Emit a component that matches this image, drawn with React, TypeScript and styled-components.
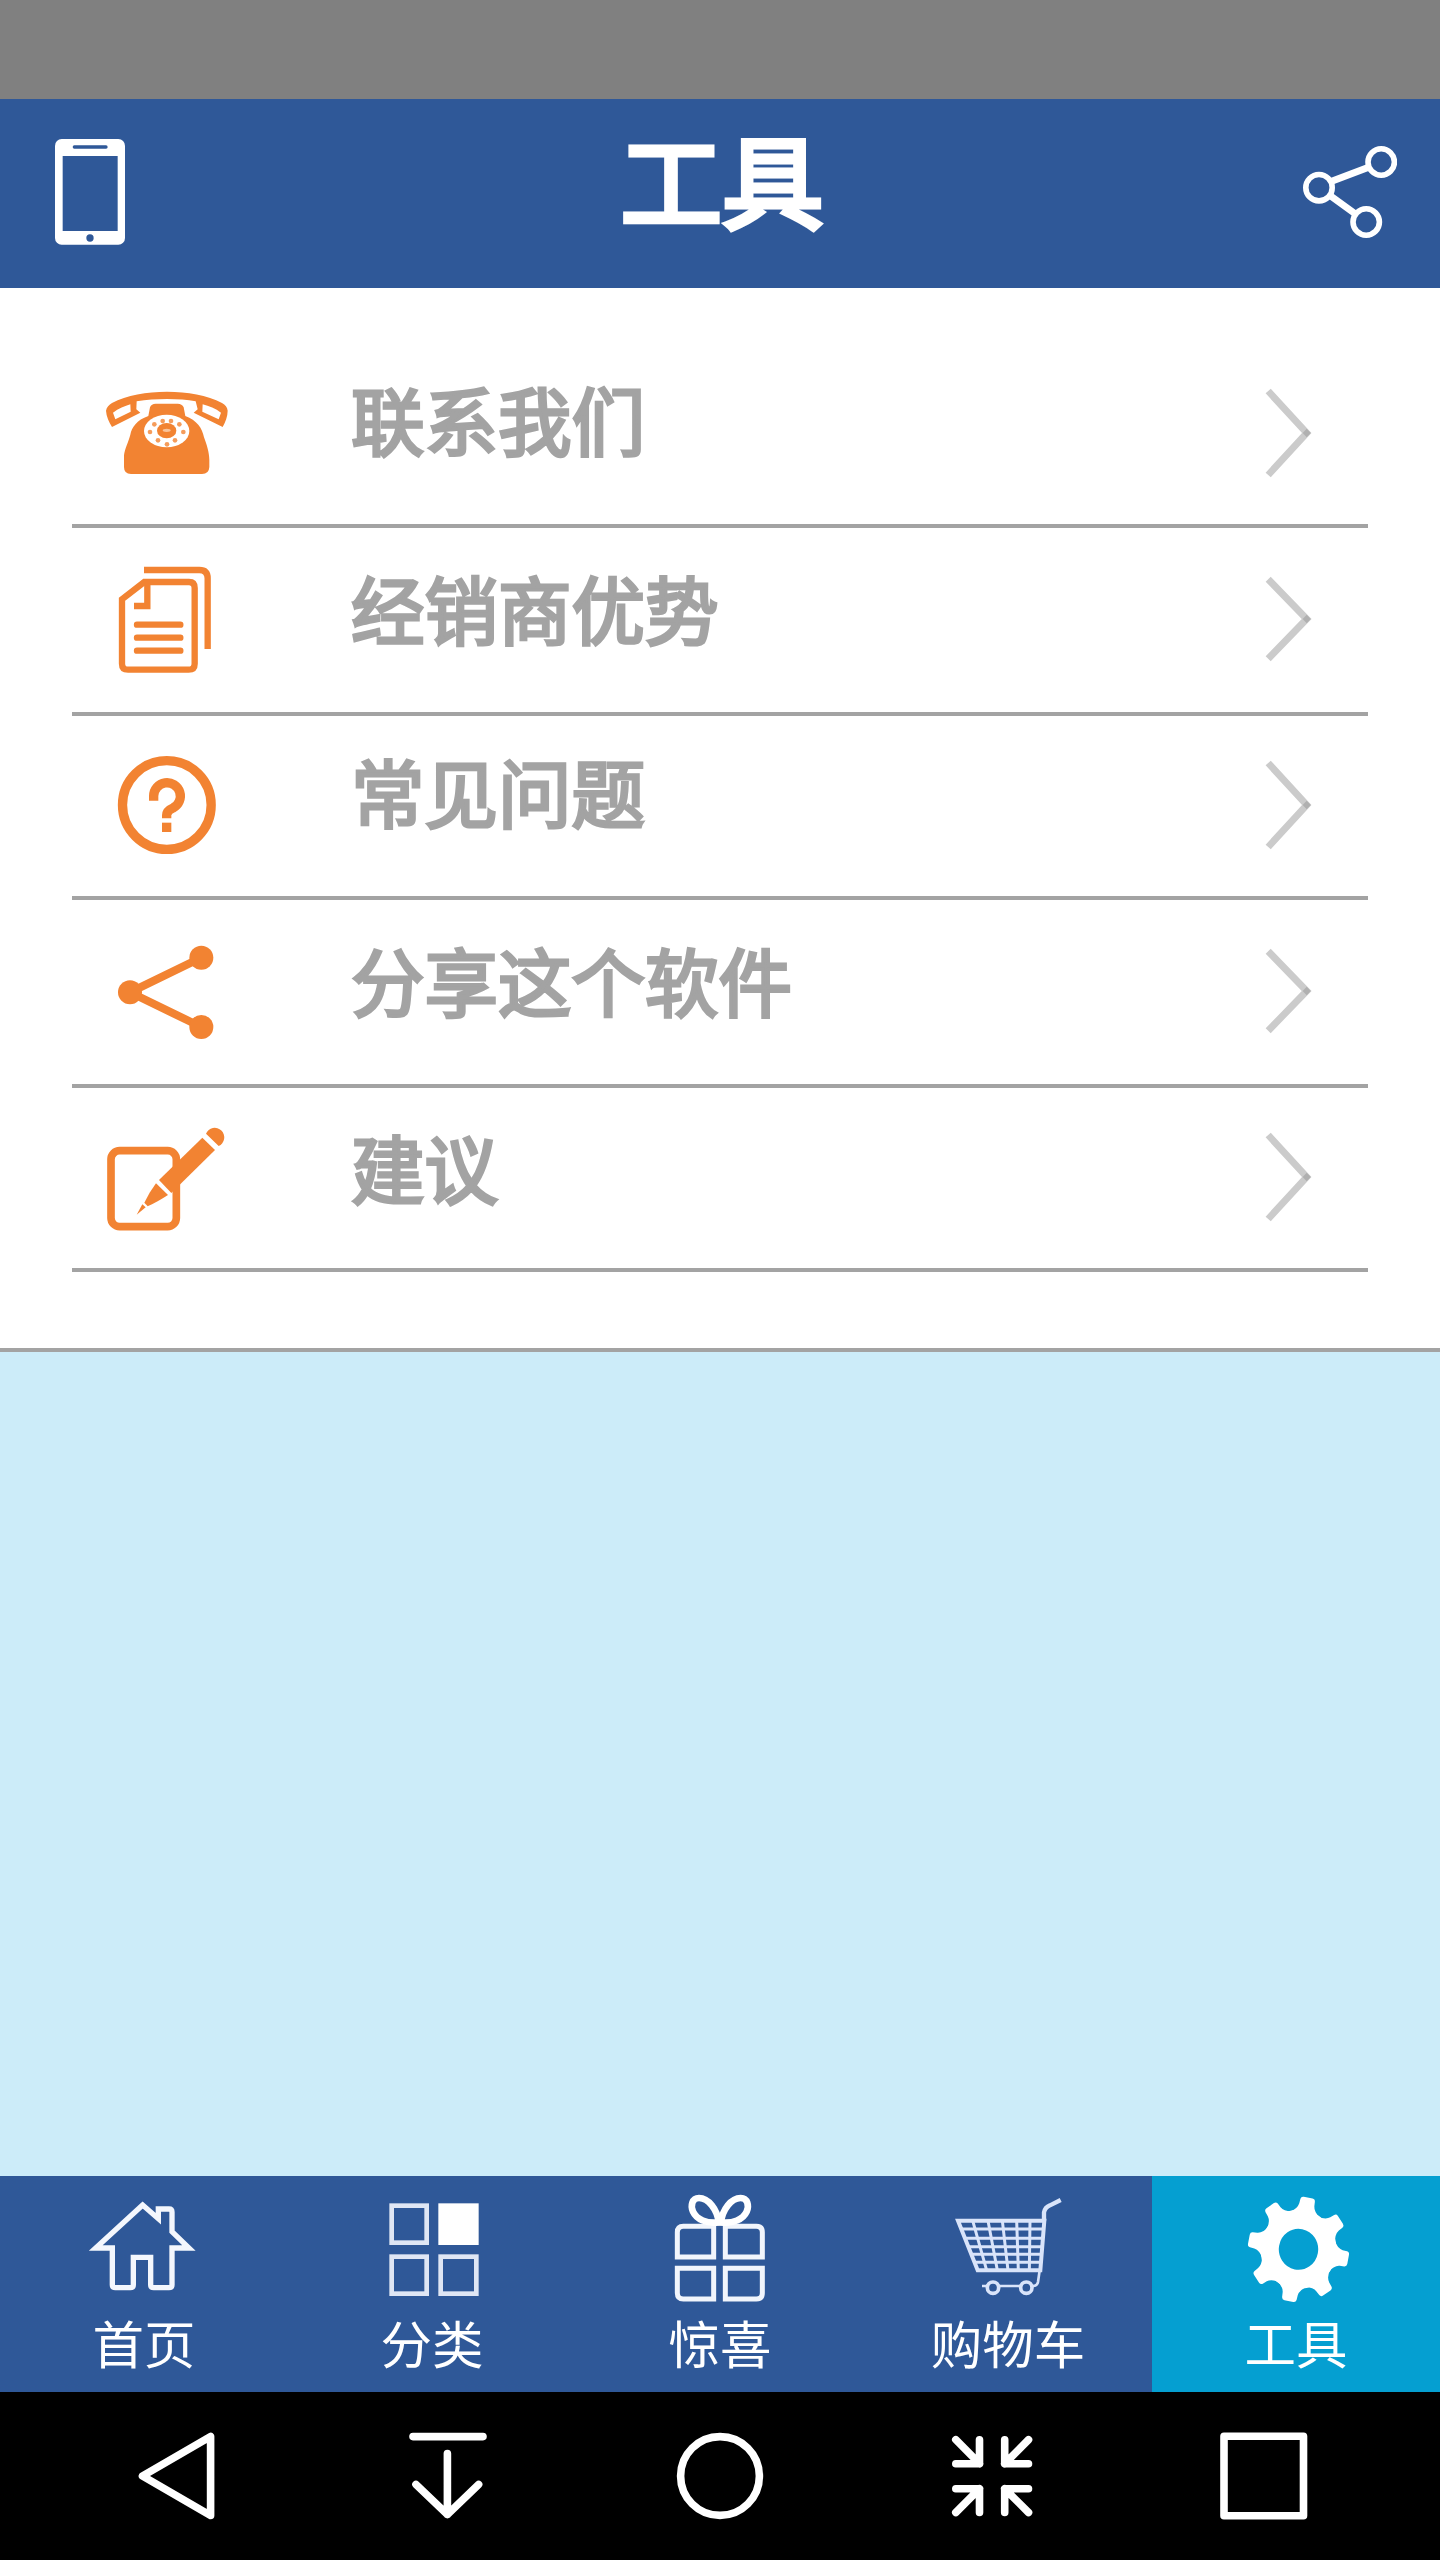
import React from "react";
import styled, { createGlobalStyle } from "styled-components";

const BLUE = "#2f5898";
const CYAN = "#059fd1";
const ORANGE = "#f28332";
const GREY = "#a3a3a3";

const GlobalStyle = createGlobalStyle`
  *, *::before, *::after { box-sizing: border-box; }
  body {
    margin: 0;
    font-family: "Noto Sans CJK SC", "Noto Sans", sans-serif;
  }
`;

const Screen = styled.div`
  display: flex;
  flex-direction: column;
  width: 1440px;
  height: 2560px;
  overflow: hidden;
  background: #ccecf9;
`;

const StatusBar = styled.div`
  flex: none;
  height: 99px;
  background: #808080;
`;

const Header = styled.header`
  flex: none;
  display: flex;
  align-items: center;
  justify-content: space-between;
  height: 189px;
  padding: 0 43px 3px 55px;
  background: ${BLUE};
`;

const Title = styled.h1`
  margin: 0;
  padding: 0 0 31px 16px;
  color: #fff;
  font-size: 101.5px;
  font-weight: 400;
  line-height: 120px;
  -webkit-text-stroke: 5.2px #fff;
`;

const Menu = styled.ul`
  flex: none;
  margin: 0;
  padding: 52px 72px 76px;
  list-style: none;
  background: #fff;
  border-bottom: 4px solid ${GREY};
`;

const MenuRow = styled.li<{ $height: number }>`
  display: flex;
  align-items: center;
  height: ${(p) => p.$height}px;
  padding: 0 48px 0 24px;
  border-bottom: 4px solid ${GREY};
`;

const MenuLabel = styled.span<{ $lift: number }>`
  flex: 1;
  padding: 0 0 ${(p) => p.$lift}px 115px;
  color: ${GREY};
  font-size: 73.5px;
  font-weight: 400;
  line-height: 100px;
  white-space: nowrap;
  -webkit-text-stroke: 3.2px ${GREY};
`;

const Spacer = styled.div`
  flex: 1;
`;

const TabBar = styled.nav`
  flex: none;
  display: grid;
  grid-template-columns: repeat(5, 1fr);
  height: 216px;
  background: ${BLUE};
`;

const Tab = styled.div<{ $active?: boolean }>`
  display: flex;
  flex-direction: column;
  align-items: center;
  padding-top: 14px;
  background: ${(p) => (p.$active ? CYAN : "transparent")};
`;

const TabLabel = styled.span`
  margin-top: 4px;
  color: #fff;
  font-size: 51.5px;
  line-height: 64px;
`;

const SystemBar = styled.footer`
  flex: none;
  display: grid;
  grid-template-columns: repeat(5, 272px);
  justify-content: center;
  place-items: center;
  height: 168px;
  background: #000;
`;

const Icon = styled.svg<{ $w: number; $h: number }>`
  display: block;
  flex: none;
  width: ${(p) => p.$w}px;
  height: ${(p) => p.$h}px;
  fill: none;
`;

const SystemIcon = styled(Icon)`
  stroke: #fff;
  stroke-width: 7.6;
  stroke-linecap: round;
  stroke-linejoin: round;
`;

const MobileIcon = () => (
  <Icon $w={70} $h={106} viewBox="165 178 210 318">
    <rect x="165" y="178" width="210" height="317" rx="20" fill="#fff" />
    <rect x="188" y="229" width="165" height="225" fill={BLUE} />
    <path d="M223 202H318" stroke={BLUE} strokeWidth="10" strokeLinecap="round" />
    <circle cx="270" cy="475" r="11" fill={BLUE} />
  </Icon>
);

const HeaderShareIcon = () => (
  <Icon $w={94} $h={92} viewBox="1303 146 94 92" stroke="#fff" strokeWidth="5.600">
    <circle cx="1319" cy="187.7" r="13.2" />
    <circle cx="1381.2" cy="162" r="13.2" />
    <circle cx="1366.2" cy="222" r="13.2" />
    <path d="M1331 181.500L1368 167.500M1330 195.500L1355.500 214" strokeWidth="7" />
  </Icon>
);

const DIAL_DOTS = [
  [283, 193], [308, 183], [333, 183], [358, 193], [270, 216],
  [370, 216], [294, 241], [345, 241], [321, 253],
];

const PhoneIcon = () => (
  <Icon $w={140} $h={120} viewBox="108 36 420 360">
    <path
      fill={ORANGE}
      fillRule="evenodd"
      d="M138 152C140 142 147 134 156 129C200 105 260 95 321 95C382 95 442 105 486 129C496 134 502 142 503 152C503 169 496 187 488 201L401 158L413 148L407 124C383 119 352 117 321 117C290 117 259 119 230 124L229 148L241 158L156 201C147 187 139 169 138 152ZM159 158L166 178L212 155L211 133C195 138 175 146 159 158ZM428 133L427 155L476 178L483 158C467 146 447 138 428 133Z"
    />
    <path
      fill={ORANGE}
      d="M265 168L270 142Q274 131 287 131H353Q366 131 371 142L376 168C410 181 427 204 432 232C440 253 448 278 448 300V321Q447 342 426 342H213Q192 342 192 321V286C194 267 205 247 211 224C215 203 230 180 265 168Z"
    />
    <ellipse cx="320" cy="213" rx="68" ry="49" fill="#fff" />
    <ellipse cx="320" cy="212" rx="29" ry="23" fill={ORANGE} />
    <ellipse cx="320" cy="211" rx="12" ry="5" fill="#f9c49c" />
    {DIAL_DOTS.map(([x, y]) => (
      <circle key={`${x}-${y}`} cx={x} cy={y} r="7" fill={ORANGE} opacity="0.8" />
    ))}
  </Icon>
);

const DocumentIcon = () => (
  <Icon $w={140} $h={120} viewBox="108 600 420 360" stroke={ORANGE} strokeWidth="19">
    <path d="M253 666H387Q404 666 404 684V911Q404 929 386 929H204Q186 929 186 911V718Z" />
    <path d="M262 666V738H222M252 630H418Q443 630 443 655V867" />
    <path d="M231 794H361M231 833H361M231 872H361" strokeLinecap="round" />
  </Icon>
);

const QuestionIcon = () => (
  <Icon $w={140} $h={120} viewBox="108 78 420 360" stroke={ORANGE} strokeWidth="28">
    <circle cx="320.5" cy="255" r="133" />
    <path d="M281 242V228A40 40 0 1 1 339 264Q320 272 320 286V295" />
    <path d="M320 308V336" />
  </Icon>
);

const ShareIcon = () => (
  <Icon $w={140} $h={120} viewBox="108 636 420 360">
    <path d="M424 713L210 817L424 921" stroke={ORANGE} strokeWidth="24" />
    <g fill={ORANGE}>
      <circle cx="424" cy="713" r="36" />
      <circle cx="210" cy="817" r="36" />
      <circle cx="424" cy="921" r="36" />
    </g>
  </Icon>
);

const PencilIcon = () => (
  <Icon $w={140} $h={120} viewBox="108 174 420 360">
    <rect x="153" y="272" width="196" height="228" rx="26" stroke={ORANGE} strokeWidth="23" />
    <path d="M290 366L300 356L328 402L290 425L250 445L235 440Z" fill="#fff" />
    <g fill={ORANGE}>
      <path d="M427 233L465 270L334 399L297 360Z" />
      <path d="M438 221A28.500 28.500 0 1 1 476 258Z" />
      <path d="M288 370L324 405Q290 427 263 439L253 428Q268 397 288 370Z" />
      <path d="M247 433L257 442L230 464Z" />
    </g>
  </Icon>
);

const Chevron = ({ half, shift }: { half: number; shift: number }) => (
  <Icon $w={60} $h={120} viewBox="0 0 60 120" strokeWidth="7" stroke="#cbcbcb">
    <path d={`M8.200 ${60 + shift - half}L46.700 ${60 + shift}L8.200 ${60 + shift + half}`} />
    <path
      d={`M46.700 ${55.8 + shift}l4 4.200l-4 4.200l-4 -4.200Z`}
      fill="#b0b0b0"
      stroke="none"
    />
  </Icon>
);

const HomeIcon = () => (
  <Icon $w={120} $h={116} viewBox="252 90 360 348" stroke="#f4f7fd" strokeWidth="16">
    <path d="M428 135L287 264H337V374Q337 383 346 383H391Q400 383 400 374V292H452V374Q452 383 461 383H507Q516 383 516 374V264H567L516 215V156Q516 147 507 147H475V176Z" />
  </Icon>
);

const GridIcon = () => (
  <Icon $w={120} $h={116} viewBox="1116 90 360 348" stroke="#dfe6f4" strokeWidth="14">
    <rect x="1175" y="137" width="105" height="111" />
    <rect x="1322" y="137" width="107" height="111" fill="#fff" stroke="#fff" />
    <rect x="1175" y="290" width="105" height="111" />
    <rect x="1322" y="290" width="107" height="111" />
  </Icon>
);

const GiftIcon = () => (
  <Icon $w={120} $h={116} viewBox="120 90 360 348" stroke="#f1f5fc" strokeWidth="15">
    <path d="M281 199H190Q172 199 172 217V291H281Z" />
    <path d="M316 199H409Q427 199 427 217V291H316Z" />
    <path d="M281 325H172V399Q172 417 190 417H281Z" />
    <path d="M316 325H427V399Q427 417 409 417H316Z" />
    <g stroke="#fff" strokeWidth="20">
      <path d="M296 187C292 148 265 114 237 114C216 114 211 137 219 155C230 179 260 191 296 187Z" />
      <path d="M303 187C307 148 334 114 362 114C383 114 388 137 380 155C369 179 339 191 303 187Z" />
    </g>
  </Icon>
);

const CartIcon = () => (
  <Icon $w={120} $h={116} viewBox="984 90 360 348" stroke="#d9e4fa">
    <path d="M1014 182H1273L1261 331H1073Z" strokeWidth="12" />
    <path
      d="M1022 207H1270M1032 235H1268M1043 260H1266M1052 283H1264M1060 307H1262"
      strokeWidth="9"
    />
    <path
      d="M1058 182L1100 331M1104 182L1132 331M1147 182L1164 331M1190 182L1195 331M1230 182L1228 331"
      strokeWidth="9"
    />
    <path d="M1272 182V157Q1275 142 1290 136L1322 120" strokeWidth="13" />
    <path d="M1259 331L1254 366Q1252 378 1238 378M1204 378H1136M1102 378H1086" strokeWidth="8" />
    <circle cx="1119" cy="383" r="17" strokeWidth="11" />
    <circle cx="1219" cy="383" r="17" strokeWidth="11" />
  </Icon>
);

const GEAR_TEETH = [0, 45, 90, 135, 180, 225, 270, 315];

const GearIcon = () => (
  <Icon $w={120} $h={116} viewBox="408 90 360 348">
    <g transform="translate(595.5 268) scale(0.96 1) rotate(11)">
      {GEAR_TEETH.map((angle) => (
        <path
          key={angle}
          transform={`rotate(${angle})`}
          fill="#fff"
          d="M-50 -104Q-26 -118 -24 -136L-23 -150Q-22 -158 -14 -158H14Q22 -158 23 -150L24 -136Q26 -118 50 -104Z"
        />
      ))}
      <circle r="90" stroke="#fff" strokeWidth="57" />
    </g>
  </Icon>
);

const MENU = [
  { label: "联系我们", icon: <PhoneIcon />, height: 188, lift: 28, half: 42, shift: 1 },
  { label: "经销商优势", icon: <DocumentIcon />, height: 188, lift: 27, half: 39.7, shift: -1 },
  { label: "常见问题", icon: <QuestionIcon />, height: 184, lift: 32, half: 42, shift: -1 },
  { label: "分享这个软件", icon: <ShareIcon />, height: 188, lift: 27, half: 39.7, shift: -1 },
  { label: "建议", icon: <PencilIcon />, height: 184, lift: 24, half: 42, shift: -1 },
];

const TABS = [
  { label: "首页", icon: <HomeIcon /> },
  { label: "分类", icon: <GridIcon /> },
  { label: "惊喜", icon: <GiftIcon /> },
  { label: "购物车", icon: <CartIcon /> },
  { label: "工具", icon: <GearIcon />, active: true },
];

export default function App() {
  return (
    <>
      <GlobalStyle />
      <Screen>
        <StatusBar />
        <Header>
          <MobileIcon />
          <Title>工具</Title>
          <HeaderShareIcon />
        </Header>
        <Menu>
          {MENU.map((row) => (
            <MenuRow key={row.label} $height={row.height}>
              {row.icon}
              <MenuLabel $lift={row.lift}>{row.label}</MenuLabel>
              <Chevron half={row.half} shift={row.shift} />
            </MenuRow>
          ))}
        </Menu>
        <Spacer />
        <TabBar>
          {TABS.map((tab) => (
            <Tab key={tab.label} $active={tab.active}>
              {tab.icon}
              <TabLabel>{tab.label}</TabLabel>
            </Tab>
          ))}
        </TabBar>
        <SystemBar>
          <SystemIcon $w={100} $h={100} viewBox="0 0 100 100">
            <path d="M16.500 50L84.600 10.500V89.500Z" />
          </SystemIcon>
          <SystemIcon $w={100} $h={100} viewBox="0 0 100 100">
            <path d="M15 10.600H85M49.400 27.500V88.500M18 58.500L49.400 88.500L80.600 58.500" />
          </SystemIcon>
          <SystemIcon $w={100} $h={100} viewBox="0 0 100 100">
            <circle cx="50" cy="50" r="39.400" />
          </SystemIcon>
          <SystemIcon $w={100} $h={100} viewBox="0 0 100 100">
            <path d="M13.800 13.700L37.500 37.700M37.500 13.700V37.700H13.800M86.500 13.700L62.700 37.700M62.700 13.700V37.700H86.500M13.800 86.500L37.500 62.700M37.500 86.500V62.700H13.800M86.500 86.500L62.700 62.700M62.700 86.500V62.700H86.500" />
          </SystemIcon>
          <SystemIcon $w={100} $h={100} viewBox="0 0 100 100">
            <path d="M10 10.300H89.500V89.700H10Z" />
          </SystemIcon>
        </SystemBar>
      </Screen>
    </>
  );
}
